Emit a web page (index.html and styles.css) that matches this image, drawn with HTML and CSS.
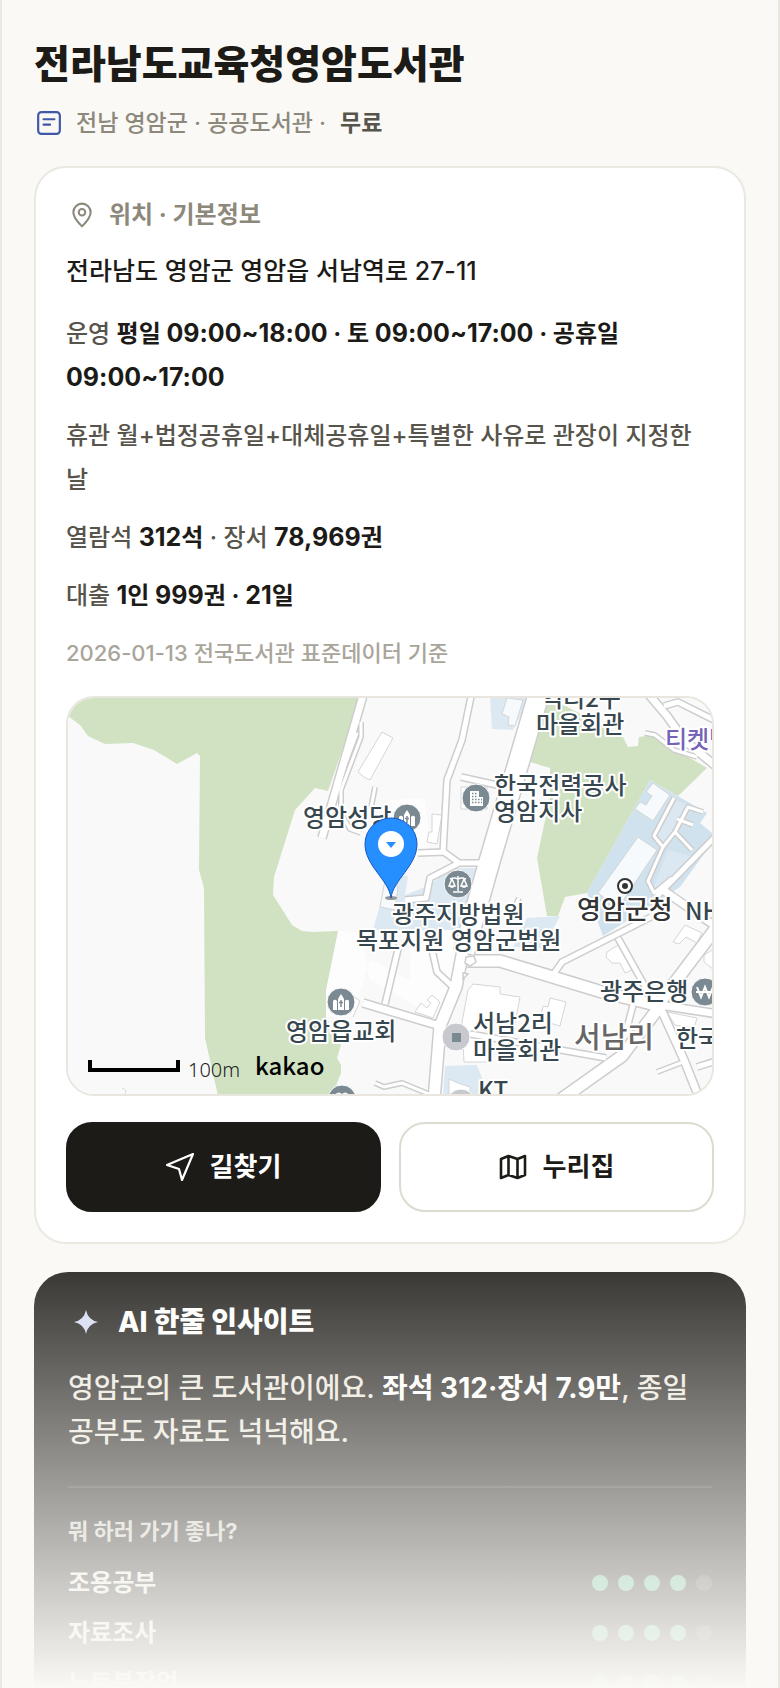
FILE: index.html
```html
<!DOCTYPE html>
<html lang="ko">
<head>
<meta charset="utf-8">
<meta name="viewport" content="width=device-width, initial-scale=1">
<title>전라남도교육청영암도서관</title>
<link rel="stylesheet" href="styles.css">
</head>
<body>
<main class="page">
  <header class="head">
    <h1 class="title">전라남도교육청영암도서관</h1>
    <p class="meta">
      <svg class="meta-icon" viewBox="0 0 24 24" fill="none" stroke="#3f58a8" stroke-width="2" stroke-linecap="round" stroke-linejoin="round" aria-hidden="true"><rect x="2" y="2" width="20" height="20" rx="3"/><path d="M7 8.500H17M7 13.500H13"/></svg>
      <span>전남 영암군 · 공공도서관 ·</span>
      <strong class="free">무료</strong>
    </p>
  </header>

  <section class="card">
    <h2 class="card-title">
      <svg class="card-icon" viewBox="0 0 24 24" fill="none" stroke="currentColor" stroke-width="1.900" stroke-linejoin="round" aria-hidden="true"><path d="M12 22.500C9 19.500 4 14.800 4 9.500A8 8 0 0 1 20 9.500C20 14.800 15 19.500 12 22.500Z"/><circle cx="12" cy="9.500" r="3"/></svg>
      위치 · 기본정보
    </h2>
    <p class="address">전라남도 영암군 영암읍 서남역로 27-11</p>
    <div class="facts">
      <p>운영 <b>평일 <span class="num">09:00~18:00</span> · 토 <span class="num">09:00~17:00</span> · 공휴일 <span class="num">09:00~17:00</span></b></p>
      <p>휴관 월+법정공휴일+대체공휴일+특별한 사유로 관장이 지정한 날</p>
      <p>열람석 <b><span class="num">312</span>석</b> · 장서 <b><span class="num">78,969</span>권</b></p>
      <p>대출 <b><span class="num">1</span>인 <span class="num">999</span>권 · <span class="num">21</span>일</b></p>
    </div>
    <p class="source">2026-01-13 전국도서관 표준데이터 기준</p>

    <div class="map">
      <svg class="map-art" viewBox="68 698 644 396" preserveAspectRatio="xMidYMid slice" role="img" aria-label="도서관 위치 지도">
        <defs>
          <g id="road-narrow">
            <path d="M357 733L331 803M375 787L371 808M361 722V737L341 790V813L350 829L361 833"/>
            <path d="M645 733L655 735L674 750L697 757"/>
            <path d="M674 798L654 836L663 847L648 881L654 893L672 878"/>
            <path d="M703 812L688 807L675 832L692 850M677 819L693 825M663 847L675 832"/>
            <path d="M657 1072L683 1062M375 1083L384 1087L402 1083L436 1097M519 898L513 911"/>
          </g>
          <g id="road-small">
            <path d="M472 692L462 740L447 780L443 853M418 853L444 852L459 863H480M459 863L430 878L426 898L405 900M461 777L497 785"/>
            <path d="M399 945L385 1004M432 950L437 972L453 987M553 975L562 962L651 917M657 896L714 838M633 1005L627 1028M470 1034L606 1058M618 938L647 990"/>
            <path d="M664 706L678 702L714 720M697 1067L716 1061M440 850V853"/>
          </g>
          <g id="road-medium">
            <path d="M364 692L322 838M363 1003L440 1026M645 690L667 716L684 740L718 768M660 888L718 928M647 990L660 1007L684 1060L700 1100M660 1005L718 1014"/>
          </g>
          <g id="road-large">
            <path d="M467 961H500L602 992L660 1006M660 1006L622 1056L560 1100M716 928L660 1002M463 950L456 987L440 1026L434 1100"/>
          </g>
          <path id="road-main" d="M540 690L489 863L464 952"/>
          <g id="church"><circle r="14" fill="#7b8a92" stroke="#fff"/><path d="M-8 8V-1A2.500 3 0 0 1-4 -1V8ZM-3 8V-3Q-2 -5 0 -8Q2 -5 3 -3V8ZM4 8V-1A2.500 3 0 0 1 8 -1V8Z" fill="#fff"/><path d="M0 -2V5M-2 0.500H2" stroke="#7b8a92" stroke-width="1.500"/></g>
        </defs>
        <rect x="60" y="690" width="660" height="410" fill="#f9f9f9"/>
        <path fill="#fdfdfd" d="M338 931L360 932L370 980L440 1020L470 960L480 920L460 900L440 930H410V980L370 960L352 1017H326V990ZM390 800L425 798L430 850L405 860Z"/>
        <path fill="#d1e2c3" d="M68 716L80 725L88 736L105 744L133 743L154 750L177 764L197 753L200 756L199 870L204 888L205 1038L218 1096H332L341 1073V1065L337 1058L341 1045L326 1017V990L338 931L313 932L302 931L292 925L273 895L274 877L295 810L315 788L328 791L361 696H68Z"/>
        <path fill="#d1e2c3" d="M548 697L600 724L623 737L628 747L638 746L639 737L653 735L667 745L690 758L707 768L678 796L650 780L587 893L565 897L558 916H547L537 858L550 797V768L530 762L538 733Z"/>
        <path fill="#dce9f2" d="M490 697L492 729L513 730L530 697ZM388 876H408L405 895L430 885L450 868H484L470 930H373ZM527 918L560 916L543 948L513 947ZM445 1066L477 1065L489 1096H443Z"/>
        <path fill="#d0e2ee" d="M650 780L707 813L700 823L712 833V843L680 887L603 936L587 893Z"/>
        <path fill="#dbe8f2" d="M676 800L694 808L664 843L655 836ZM668 850L690 856L672 885L653 888Z"/>
        <g fill="#fff" stroke="#d3d6d8">
          <path d="M382 732L393 738L370 780L364 777L358 772ZM432 814L442 815L437 844L427 842L429 832H432Z"/>
          <path fill="#f6fafd" d="M507 698L523 700L515 726L508 725L509 717L502 714ZM653 783L670 795L653 821L635 809L640 802L646 805L652 796L646 792ZM638 837L657 850L618 908L598 893ZM385 880L398 887L395 910L380 907Z"/>
          <path d="M473 984L500 987V994L520 997L515 1023L490 1020V1062H464L462 1022L468 990ZM550 998L566 1002L560 1026L540 1020L543 1006L548 1007Z"/>
          <path d="M607 952L618 945L632 970L625 973L620 963H612L606 957ZM685 925L702 933L697 943L686 937L679 944L673 942ZM432 995L440 1002L433 1018L415 1012L421 1003L427 1008L431 1003L427 1000ZM449 1079L458 1083L470 1087V1096H449ZM667 1012L697 1018L694 1028L675 1025Z"/>
          <path d="M461 787H487V809H461ZM704 955L714 949V970L704 962ZM122 1088L126 1091L124 1095M342 988L360 1001L353 1017"/>
        </g>
        <g fill="none" stroke="#cdcdcd" stroke-linejoin="round">
          <use href="#road-narrow" stroke-width="6"/><use href="#road-small" stroke-width="8"/><use href="#road-medium" stroke-width="10"/><use href="#road-large" stroke-width="14"/><use href="#road-main" stroke-width="23"/>
        </g>
        <g fill="none" stroke="#fff" stroke-linejoin="round">
          <use href="#road-narrow" stroke-width="3"/><use href="#road-small" stroke-width="5"/><use href="#road-medium" stroke-width="7"/><use href="#road-large" stroke-width="11"/><use href="#road-main" stroke-width="20"/>
        </g>
        <path d="M466 957L474 956L476 962L470 966L465 963ZM463 973L468 974L463 979Z" fill="#fff" stroke="#cdcdcd" stroke-width="1.500"/>

        <use href="#church" x="407" y="818"/>
        <use href="#church" x="341" y="1002"/>
        <g transform="translate(476 798)"><circle r="14" fill="#7b8a92" stroke="#fff"/><path d="M-6 -7H3V-1H7V8H-6Z" fill="#fff"/><path d="M-4 -4.500H2M-4 -1.500H2M-4 1.500H6M-4 4.500H6" stroke="#7b8a92" stroke-width="1.500" stroke-dasharray="1.500 1.500"/></g>
        <g transform="translate(458 884)"><circle r="14" fill="#7b8a92" stroke="#fff"/><path d="M0 -8V7M-5 8H5M-8 -5Q-4 -7 0 -5Q4 -7 8 -5M-6 -5L-9 2H-3ZM6 -5L3 2H9Z" fill="none" stroke="#fff" stroke-width="1.500"/><path d="M-9 2H-3Q-6 6 -9 2ZM3 2H9Q6 6 3 2Z" fill="#fff"/></g>
        <g transform="translate(705 992)"><circle r="14" fill="#7b8a92" stroke="#fff"/><path d="M-8 -5L-4 5L0 -5L4 5L8 -5M-9 0H9" fill="none" stroke="#fff" stroke-width="2"/></g>
        <g transform="translate(456 1037)"><circle r="14" fill="#c8c8cf" stroke="#fff"/><rect x="-4" y="-4" width="9" height="9" fill="#7b8a92"/></g>
        <circle cx="461" cy="1103" r="14" fill="#c8c8cf" stroke="#fff"/>
        <circle cx="342" cy="1099" r="14" fill="#7b8a92" stroke="#fff"/>
        <path d="M334 1096Q338 1090 342 1094Q346 1090 350 1096" fill="#fff"/>
        <circle cx="625" cy="886" r="7" fill="#fff" stroke="#333" stroke-width="2"/><circle cx="625" cy="886" r="3" fill="#333"/>

        <g class="place">
          <text x="303" y="826">영암성당</text>
          <text x="494" y="794">한국전력공사</text>
          <text x="494" y="820">영암지사</text>
          <text x="541" y="707">역리2구</text>
          <text x="536" y="733">마을회관</text>
          <text x="392" y="923">광주지방법원</text>
          <text x="356" y="949">목포지원 영암군법원</text>
          <text x="685" y="920">NH농협</text>
          <text x="600" y="1000">광주은행</text>
          <text x="473" y="1032">서남2리</text>
          <text x="473" y="1059">마을회관</text>
          <text x="676" y="1047">한국</text>
          <text x="478" y="1099">KT</text>
          <text x="286" y="1040">영암읍교회</text>
          <text class="place-shop" x="665" y="748">티켓박스</text>
          <text class="place-office" x="577" y="919">영암군청</text>
          <text class="place-area" x="574" y="1048">서남리</text>
        </g>

        <ellipse cx="391" cy="898" rx="6" ry="2" fill="#555" opacity=".6"/>
        <path d="M391 898C389 880 365 866 365 844A26 26 0 0 1 417 844C417 866 393 880 391 898Z" fill="#258fff" stroke="#1558c4"/>
        <circle cx="391" cy="844" r="13" fill="#fff"/><path d="M386 842H396L391 848Z" fill="#258fff"/>
        <path d="M90 1060V1070H178V1060" fill="none" stroke="#000" stroke-width="4"/>
        <text class="scale" x="188" y="1077">100m</text>
        <text class="brand" x="255" y="1075">kakao</text>
      </svg>
    </div>

    <div class="actions">
      <a class="action action-dark" href="#route">
        <svg class="action-icon" viewBox="0 0 28 28" fill="none" stroke="currentColor" stroke-width="2.200" stroke-linejoin="round" aria-hidden="true"><path d="M27 1L16 27L13 16L1 12Z"/></svg>
        길찾기
      </a>
      <a class="action" href="#homepage">
        <svg class="action-icon" viewBox="0 0 28 28" fill="none" stroke="currentColor" stroke-width="2.600" stroke-linejoin="round" aria-hidden="true"><path d="M2 6L9.500 3L18.500 6L26 3V22L18.500 25L9.500 22L2 25ZM9.500 3V22M18.500 6V25"/></svg>
        누리집
      </a>
    </div>
  </section>

  <section class="insight">
    <h2 class="insight-title">
      <svg class="spark" viewBox="0 0 24 24" fill="#d3dbf3" aria-hidden="true"><path d="M12 0Q14 10 24 12Q14 14 12 24Q10 14 0 12Q10 10 12 0Z"/></svg>
      AI 한줄 인사이트
    </h2>
    <p class="insight-text">영암군의 큰 도서관이에요. <b>좌석 312·장서 7.9만</b>, 종일 공부도 자료도 넉넉해요.</p>
    <div class="uses">
      <h3 class="uses-title">뭐 하러 가기 좋나?</h3>
      <ul class="use-list">
        <li class="use">조용공부 <span class="dots" role="img" aria-label="5점 중 4점"><i class="dot on"></i><i class="dot on"></i><i class="dot on"></i><i class="dot on"></i><i class="dot"></i></span></li>
        <li class="use">자료조사 <span class="dots" role="img" aria-label="5점 중 4점"><i class="dot on"></i><i class="dot on"></i><i class="dot on"></i><i class="dot on"></i><i class="dot"></i></span></li>
        <li class="use">노트북작업 <span class="dots" role="img" aria-label="5점 중 4점"><i class="dot on"></i><i class="dot on"></i><i class="dot on"></i><i class="dot on"></i><i class="dot"></i></span></li>
      </ul>
    </div>
  </section>
  <div class="fade"></div>
</main>
</body>
</html>
```
FILE: styles.css
```css
* { box-sizing: border-box; }

body {
  margin: 0;
  background: #faf9f5;
  color: #1c1b17;
  font-family: Inter, "Noto Sans CJK KR", sans-serif;
  font-weight: 500;
}

h1, h2, h3, p, ul { margin: 0; padding: 0; }
svg { display: block; flex: none; }

.page {
  position: relative;
  height: 100vh;
  overflow: hidden;
  padding: 38px 32px 0;
  border: solid #e9e8e1;
  border-width: 0 2px;
}

.title { font-size: 39px; line-height: 52px; font-weight: 800; }

.meta {
  display: flex;
  align-items: center;
  margin-top: 16px;
  color: #8c887b;
  font-size: 23px;
  line-height: 34px;
}
.meta-icon { width: 26px; height: 26px; margin: 0 14px 0 2px; }
.free { margin-left: 14px; color: #57544b; font-weight: 700; }

.card {
  margin-top: 26px;
  padding: 30px;
  border: 2px solid #e9e8e1;
  border-radius: 32px;
  background: #fff;
}
.card-title {
  display: flex;
  align-items: center;
  gap: 14px;
  color: #8c887b;
  font-size: 24px;
  line-height: 34px;
  font-weight: 700;
}
.card-icon { width: 26px; height: 26px; margin-left: 3px; }

.address { margin-top: 18px; font-size: 25px; line-height: 42px; }

.facts {
  display: grid;
  gap: 14px;
  margin-top: 20px;
  color: #57544b;
  font-size: 24px;
  line-height: 44px;
}
.facts b { color: #1c1b17; font-weight: 700; }
.num { font-size: 25px; line-height: 1; }

.source { margin-top: 18px; color: #a9a59a; font-size: 22px; line-height: 34px; }

.map {
  height: 400px;
  margin-top: 26px;
  overflow: hidden;
  border: 2px solid #e9e6df;
  border-radius: 28px;
}
.map-art { width: 100%; height: 100%; }
.place {
  fill: #37474f;
  stroke: #fff;
  stroke-width: 4px;
  stroke-linejoin: round;
  paint-order: stroke;
  font: 500 24px "Noto Sans CJK KR", sans-serif;
}
.place-shop { fill: #7563b8; }
.place-office { fill: #333; font-size: 26px; }
.place-area { fill: #666; font-size: 29px; }
.scale { fill: #222; font: 300 20px "Noto Sans", sans-serif; }
.brand { font: 500 24px "Noto Sans CJK KR", sans-serif; }

.actions { display: grid; grid-template-columns: 1fr 1fr; gap: 18px; margin-top: 26px; }
.action {
  display: flex;
  align-items: center;
  justify-content: center;
  gap: 16px;
  height: 90px;
  border: 2px solid #dddad0;
  border-radius: 26px;
  color: #1c1b17;
  font-size: 26px;
  line-height: 36px;
  font-weight: 700;
  text-decoration: none;
}
.action-dark { border-color: #1c1b17; background: #1c1b17; color: #fff; }
.action-icon { width: 28px; height: 28px; }

.insight {
  margin-top: 28px;
  padding: 30px 34px;
  border-radius: 34px;
  background: #1c1b17;
  color: #fff;
}
.insight-title {
  display: flex;
  align-items: center;
  gap: 20px;
  font-size: 28px;
  line-height: 40px;
  font-weight: 800;
}
.spark { width: 24px; height: 24px; margin-left: 6px; }
.insight-text { margin-top: 24px; color: #ebe8df; font-size: 28px; line-height: 44px; }
.insight-text b { color: #fff; font-weight: 700; }

.uses { margin-top: 32px; padding-top: 28px; border-top: 2px solid #34332f; }
.uses-title { color: #d0cdc4; font-size: 22px; line-height: 30px; font-weight: 700; }
.use-list { margin-top: 12px; list-style: none; }
.use {
  display: flex;
  align-items: center;
  justify-content: space-between;
  color: #f1efe8;
  font-size: 24px;
  line-height: 50px;
  font-weight: 600;
}
.dots { display: flex; gap: 10px; }
.dot { width: 16px; height: 16px; border-radius: 50%; background: #403f3b; }
.dot.on { background: #5ab58c; }

.fade {
  position: absolute;
  right: -2px;
  bottom: 0;
  left: -2px;
  height: 480px;
  background: linear-gradient(rgba(250, 249, 245, 0), #faf9f5);
  pointer-events: none;
}
```
